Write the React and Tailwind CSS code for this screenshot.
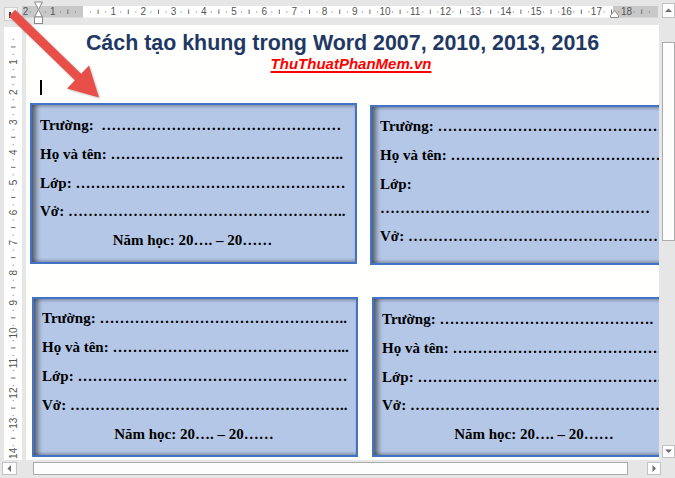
import React from 'react';

const D = (n) => '…'.repeat(n);

// khung phiếu: mỗi dòng có text, mt (khoảng cách) và center
const boxes = {
  b1: [
    { t: 'Trường:\u00a0\u00a0' + D(16) },
    { t: 'Họ và tên: ' + D(15) + '..', mt: 'mt-[8.75px]' },
    { t: 'Lớp: ' + D(18), mt: 'mt-[8.75px]' },
    { t: 'Vở: ' + D(18) + '..', mt: 'mt-[8.75px]' },
    { t: 'Năm học: 20…. – 20……', mt: 'mt-[8.75px]', center: true },
  ],
  b2: [
    { t: 'Trường: ' + D(20) },
    { t: 'Họ và tên: ' + D(20), mt: 'mt-[9px]' },
    { t: 'Lớp:', mt: 'mt-[9px]' },
    { t: D(18), mt: 'mt-[4px]' },
    { t: 'Vở: ' + D(20), mt: 'mt-[8px]' },
  ],
  b3: [
    { t: 'Trường: ' + D(16) + '..' },
    { t: 'Họ và tên: ' + D(15) + '...', mt: 'mt-[9px]' },
    { t: 'Lớp: ' + D(18), mt: 'mt-[9px]' },
    { t: 'Vở: ' + D(18) + '..', mt: 'mt-[9px]' },
    { t: 'Năm học: 20…. – 20……', mt: 'mt-[9px]', center: true },
  ],
  b4: [
    { t: 'Trường: ' + D(14) + '.' },
    { t: 'Họ và tên: ' + D(20), mt: 'mt-[8.75px]' },
    { t: 'Lớp: ' + D(20), mt: 'mt-[8.75px]' },
    { t: 'Vở: ' + D(20), mt: 'mt-[8.75px]' },
    { t: 'Năm học: 20…. – 20……', mt: 'mt-[8.75px]', center: true },
  ],
};

const Box = ({ lines, className }) => (
  <div
    className={`shrink-0 overflow-hidden border-2 border-[#4472c4] bg-[#b4c7e7] pl-[8px] shadow-[inset_6px_0_5px_-2px_rgba(0,0,0,0.5),inset_0_3px_3px_-1px_rgba(0,0,0,0.18),inset_0_-3px_3px_-1px_rgba(0,0,0,0.18)] [font-family:'Liberation_Serif','Times_New_Roman',serif] ${className}`}
  >
    {lines.map((l, i) => (
      <div
        key={i}
        className={`overflow-hidden whitespace-nowrap text-[15px] font-bold leading-[20px] text-black ${l.mt || ''} ${l.center ? 'pr-[10px] text-center' : ''}`}
      >
        {l.t}
      </div>
    ))}
  </div>
);

const HRuler = () => {
  const marks = [];
  for (let n = -3; n <= 19; n++) {
    const base = 61 + 30.2 * n;
    [0.25, 0.5, 0.75].forEach((f) => {
      const x = base + 30.2 * f;
      if (x < 1 || x > 635) return;
      if (f === 0.5) {
        if (Math.abs(x - 16) < 3) return; // dưới dấu thụt lề
        marks.push(<line key={`l${n}`} x1={x} x2={x} y1={9.5} y2={14} stroke="#6e6e6e" strokeWidth="1" />);
      } else {
        marks.push(<rect key={`d${n}${f}`} x={x - 0.5} y={11.5} width="1" height="1" fill="#6e6e6e" />);
      }
    });
  }
  const nums = [];
  for (let n = -2; n <= 18; n++) {
    if (n === 0) continue;
    nums.push(
      <text key={`n${n}`} x={Math.max(61 + 30.2 * n, 3.5)} y={15.2} textAnchor="middle" fontSize="10" fill="#555" fontFamily="'Liberation Sans', Arial, sans-serif">
        {Math.abs(n)}
      </text>
    );
  }
  return (
    <svg width="636" height="25" className="shrink-0">
      <rect x="0" y="6" width="61" height="11.5" fill="#c8c8c8" />
      <rect x="61" y="6" width="530" height="11.5" fill="#ffffff" />
      <rect x="591" y="6" width="45" height="11.5" fill="#c8c8c8" />
      {marks}
      {nums}
      {/* dấu thụt lề trái */}
      <polygon points="12.5,2 20.5,2 16.5,9.5" fill="#fff" stroke="#8a8a8a" strokeWidth="1" />
      <polygon points="12.5,17 20.5,17 16.5,9.5" fill="#fff" stroke="#8a8a8a" strokeWidth="1" />
      <rect x="12.5" y="17" width="8" height="6.5" fill="#fff" stroke="#8a8a8a" strokeWidth="1" />
      {/* dấu thụt lề phải */}
      <polygon points="588.5,17.5 596.5,17.5 596.5,15.5 592.5,10.5 588.5,15.5" fill="#fff" stroke="#8a8a8a" strokeWidth="1" />
    </svg>
  );
};

const VRuler = () => {
  const marks = [];
  const y0 = 4.9;
  for (let n = 0; n <= 14; n++) {
    const base = y0 + 30.1 * n;
    [0.25, 0.5, 0.75].forEach((f) => {
      const y = base + 30.1 * f;
      if (y > 432) return;
      if (f === 0.5) marks.push(<line key={`l${n}`} x1={7} x2={11.5} y1={y} y2={y} stroke="#6e6e6e" strokeWidth="1" />);
      else marks.push(<rect key={`d${n}${f}`} x={8.7} y={y - 0.5} width="1" height="1" fill="#6e6e6e" />);
    });
  }
  const nums = [];
  for (let n = 1; n <= 14; n++) {
    const y = y0 + 30.1 * n;
    nums.push(
      <text key={n} x={9.2} y={y} textAnchor="middle" dominantBaseline="central" fontSize="10" fill="#555" fontFamily="'Liberation Sans', Arial, sans-serif" transform={`rotate(-90 9.2 ${y})`}>
        {n}
      </text>
    );
  }
  return (
    <svg width="18" height="433" className="block">
      <rect x="0" y="0" width="18" height="433" fill="#fff" />
      {marks}
      {nums}
    </svg>
  );
};

const Arrow = () => (
  <svg width="110" height="105" className="pointer-events-none absolute left-0 top-0 drop-shadow-[1px_1px_1px_rgba(0,0,0,0.25)]">
    <polygon
      points="15.1,9.8 81.1,73.8 89,65.5 99,97.5 67,88.5 74.9,80.2 8.9,16.2"
      fill="#e84f49"
    />
  </svg>
);

const Tri = ({ dir }) => {
  const pts = {
    up: '1,5 8,5 4.5,1.5',
    down: '1,1.5 8,1.5 4.5,5',
    left: '5,1 5,8 1.5,4.5',
    right: '1.5,1 1.5,8 5,4.5',
  }[dir];
  return (
    <svg width={dir === 'up' || dir === 'down' ? 9 : 7} height={dir === 'up' || dir === 'down' ? 7 : 9}>
      <polygon points={pts} fill="#707070" />
    </svg>
  );
};

export default function App() {
  return (
    <div className="relative flex h-[478px] w-[675px] overflow-hidden bg-[#e6e6e6] [font-family:'Liberation_Sans',Arial,sans-serif]">
      <div className="flex w-[662px] shrink-0 flex-col">
        {/* thước ngang */}
        <div className="flex h-[25px] shrink-0">
          <div className="w-[22px] shrink-0 pl-[4px] pt-[7px]">
            <div className="flex h-[14px] w-[14px] items-center justify-center border border-[#cfcfcf] bg-[#f5f5f5]">
              <div className="ml-[1px] mt-[1px] h-[6px] w-[6px] border-b-2 border-l-2 border-[#404040]" />
            </div>
          </div>
          <HRuler />
        </div>

        {/* thước dọc + trang */}
        <div className="flex h-[436px] shrink-0">
          <div className="w-[26px] shrink-0 pl-[4px] pt-[2px]">
            <VRuler />
          </div>
          <div className="h-[435px] w-[633px] shrink-0 overflow-hidden bg-[#fffffe]">
            <h1 className="mt-[7px] whitespace-nowrap text-center text-[21.4px] font-bold leading-[23px] text-[#1f3864]">
              Cách tạo khung trong Word 2007, 2010, 2013, 2016
            </h1>
            <div className="flex justify-center">
              <span className="ml-[17px] text-[15px] font-bold italic leading-[17px] text-[#ff0000] underline decoration-[1.5px] underline-offset-[2px]">
                ThuThuatPhanMem.vn
              </span>
            </div>
            <div className="ml-[14px] mt-[8px] h-[15px] w-[1.5px] bg-black" />

            <div className="mt-[8px] flex items-start gap-[13px] pl-[4px]">
              <Box lines={boxes.b1} className="h-[161px] w-[327px] pt-[10px]" />
              <Box lines={boxes.b2} className="mt-[2px] h-[160px] w-[327px] pt-[9px]" />
            </div>

            <div className="mt-[32px] flex items-start gap-[14px] pl-[6px]">
              <Box lines={boxes.b3} className="h-[160px] w-[326px] pt-[9px]" />
              <Box lines={boxes.b4} className="h-[160px] w-[326px] pt-[10px]" />
            </div>
          </div>
        </div>

        {/* thanh cuộn ngang */}
        <div className="flex h-[17px] shrink-0 items-start pt-[1px]">
          <div className="ml-[2px] flex h-[13px] w-[15px] items-center justify-center border border-[#c2c2c2] bg-[#fdfdfd]">
            <Tri dir="left" />
          </div>
          <div className="ml-[16px] h-[13px] w-[595px] border border-[#ababab] bg-[#fdfdfd]" />
          <div className="ml-[19px] flex h-[13px] w-[14px] items-center justify-center border border-[#c2c2c2] bg-[#fdfdfd]">
            <Tri dir="right" />
          </div>
        </div>
      </div>

      {/* thanh cuộn dọc */}
      <div className="flex w-[13px] shrink-0 flex-col">
        <div className="mt-[3px] flex h-[15px] items-center justify-center border border-[#c2c2c2] bg-[#fdfdfd]">
          <Tri dir="up" />
        </div>
        <div className="h-[24px] bg-[#e6e6e6]" />
        <div className="h-[199px] border border-[#ababab] bg-[#fdfdfd]" />
        <div className="h-[204px]" />
        <div className="flex h-[13px] items-center justify-center border border-[#c2c2c2] bg-[#fdfdfd]">
          <Tri dir="down" />
        </div>
      </div>

      <Arrow />
    </div>
  );
}
